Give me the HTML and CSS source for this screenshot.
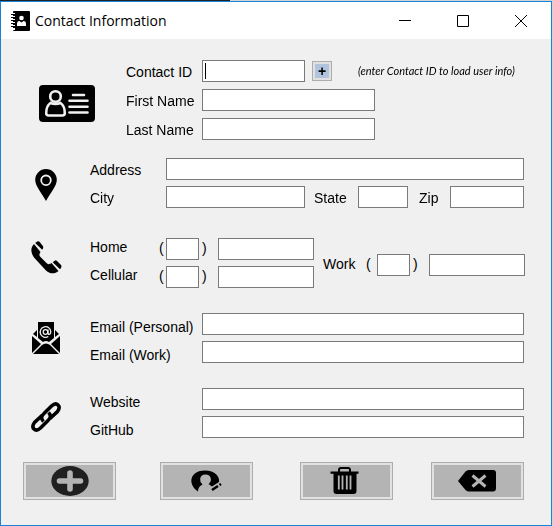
FILE: index.html
```html
<!DOCTYPE html>
<html lang="en">
<head>
<meta charset="utf-8">
<title>Contact Information</title>
<link rel="stylesheet" href="styles.css">
</head>
<body>
<main class="window">
  <header class="titlebar">
    <svg class="app-icon" viewBox="0 0 19 20" aria-hidden="true">
      <rect x="2" y="0" width="17" height="20" rx="1"/>
      <path d="M0 3h4M0 6h4M0 9h4M0 12h4M0 15h4M0 18h4" stroke="#fff" stroke-width="2"/>
      <path d="M0 3.500h4M0 6.500h4M0 9.500h4M0 12.500h4M0 15.500h4" stroke="#000" stroke-width="1"/>
      <circle cx="10.500" cy="7" r="2.300" fill="#fff"/>
      <path d="M6 15v-2q0-3 2.500-3l2 1.500 2-1.500q2.500 0 2.500 3v2z" fill="#fff"/>
    </svg>
    <h1 class="title">Contact Information</h1>
    <div class="window-controls">
      <button type="button" class="window-button" aria-label="Minimize"><svg class="window-glyph" viewBox="0 0 12 12"><path d="M0 5.500h12"/></svg></button>
      <button type="button" class="window-button" aria-label="Maximize"><svg class="window-glyph" viewBox="0 0 12 12"><path d="M.5.5h11v11H.5z"/></svg></button>
      <button type="button" class="window-button" aria-label="Close"><svg class="window-glyph" viewBox="0 0 12 12"><path d="M0 0l12 12M12 0L0 12"/></svg></button>
    </div>
  </header>

  <form class="form">
    <section class="section section-name">
      <svg class="icon icon-card" viewBox="0 0 56 37" aria-hidden="true">
        <rect width="56" height="37" rx="4"/>
        <g fill="none" stroke="#f0f0f0" stroke-width="2.600" stroke-linecap="round">
          <circle cx="16.500" cy="11.500" r="5.300"/>
          <path d="M11.500 18q-4.300 3-4.300 10 0 2.500 2.500 2.500h13.600q2.500 0 2.500-2.500 0-7-4.300-10-5 2-10 0z"/>
          <path d="M34 10h11M30.500 15.800h18M30.500 21.800h18M30.500 27.500h18"/>
        </g>
      </svg>
      <div class="fields">
        <div class="row">
          <label class="label" for="contact-id">Contact ID</label>
          <input class="box box-id" id="contact-id" type="text" autofocus>
          <button type="button" class="load" aria-label="Load contact">+</button>
          <span class="hint">(enter Contact ID to load user info)</span>
        </div>
        <div class="row">
          <label class="label" for="first-name">First Name</label>
          <input class="box box-name" id="first-name" type="text">
        </div>
        <div class="row">
          <label class="label" for="last-name">Last Name</label>
          <input class="box box-name" id="last-name" type="text">
        </div>
      </div>
    </section>

    <section class="section section-address">
      <svg class="icon icon-pin" viewBox="0 0 22 32" aria-hidden="true">
        <path d="M11 0a10.800 10.800 0 0 1 10.800 10.800C21.800 17 16 23 11 32 6 23 .2 17 .2 10.800A10.800 10.800 0 0 1 11 0z"/>
        <circle cx="11" cy="11.300" r="4.800" fill="none" stroke="#f0f0f0" stroke-width="1.800"/>
      </svg>
      <div class="fields">
        <div class="row">
          <label class="label" for="address">Address</label>
          <input class="box box-wide" id="address" type="text">
        </div>
        <div class="row">
          <label class="label" for="city">City</label>
          <input class="box box-wide" id="city" type="text">
          <label class="label-state" for="state">State</label>
          <input class="box box-state" id="state" type="text">
          <label class="label-zip" for="zip">Zip</label>
          <input class="box box-zip" id="zip" type="text">
        </div>
      </div>
    </section>

    <section class="section section-phone">
      <svg class="icon icon-phone" viewBox="0 0 31 33" aria-hidden="true">
        <path d="M3 3C-1 7 0 12 3 16.500L14.500 29c4 4 9 4.500 13 1L20.500 22c-2 1.500-3 1.500-4.500.5L9.500 16c-1.500-1.500-1.500-3 0-5z"/>
        <path d="M4.200 2l2-1.500q1.200-.8 2.300.3l3.500 4.500q.8 1.200-.8 3.500zM21.700 21.200l2-1.500q1.200-.8 2.300.2l4 4q1.300 1.500-1 4.300z"/>
      </svg>
      <div class="fields">
        <div class="row">
          <label class="label" for="home">Home</label>
          <span class="paren">(</span><input class="box box-area" type="text" aria-label="Home area code"><span class="paren paren-close">)</span>
          <input class="box box-phone" id="home" type="text">
        </div>
        <div class="row">
          <label class="label" for="cell">Cellular</label>
          <span class="paren">(</span><input class="box box-area" type="text" aria-label="Cellular area code"><span class="paren paren-close">)</span>
          <input class="box box-phone" id="cell" type="text">
        </div>
      </div>
      <div class="row work">
        <label class="label-work" for="work">Work</label>
        <span class="paren paren-work">(</span><input class="box box-area" type="text" aria-label="Work area code"><span class="paren paren-close">)</span>
        <input class="box box-phone" id="work" type="text">
      </div>
    </section>

    <section class="section section-email">
      <svg class="icon icon-mail" viewBox="0 0 28 32" aria-hidden="true">
        <path d="M6 0h16v16l-5 4q-3-2-6 0l-5-4zM0 14l9 8-9 9zM28 14v17l-9-9zM1 32l9-9q4-3 8 0l9 9zM1 12l4-4v7zM27 12l-4-4v7z"/>
        <g fill="none" stroke="#f0f0f0" stroke-width="1.300">
          <circle cx="13.500" cy="10" r="2.300"/>
          <path d="M16 7.500v3.300q0 1.700 1.400 1.500 1.400-.4 1.400-2.500a5.300 5.300 0 1 0-2.500 4.700"/>
        </g>
      </svg>
      <div class="fields">
        <div class="row">
          <label class="label" for="email-personal">Email (Personal)</label>
          <input class="box box-wide" id="email-personal" type="email">
        </div>
        <div class="row">
          <label class="label" for="email-work">Email (Work)</label>
          <input class="box box-wide" id="email-work" type="email">
        </div>
      </div>
    </section>

    <section class="section section-web">
      <svg class="icon icon-link" viewBox="0 0 30 30" aria-hidden="true">
        <g fill="none" stroke="#000" stroke-width="3.600">
          <path d="M12.500 19.500q-4-4 .5-8l7.500-7.500q4-3.500 6.500-1t-.5 6.500l-7.500 7"/>
          <path d="M17.500 10.500q4 4-.5 8L9.500 26q-4 3.500-6.500 1t.5-6.500l7.500-7"/>
        </g>
      </svg>
      <div class="fields">
        <div class="row">
          <label class="label" for="website">Website</label>
          <input class="box box-wide" id="website" type="text">
        </div>
        <div class="row">
          <label class="label" for="github">GitHub</label>
          <input class="box box-wide" id="github" type="text">
        </div>
      </div>
    </section>

    <div class="actions">
      <button type="button" class="action" aria-label="Add contact">
        <svg class="action-icon" viewBox="0 0 40 32"><ellipse cx="20" cy="16" rx="18.700" ry="15" fill="#202020"/><path d="M20 8v16M9.500 16h21" stroke="#b4b4b4" stroke-width="5.600" stroke-linecap="round"/></svg>
      </button>
      <button type="button" class="action" aria-label="Edit contact">
        <svg class="action-icon" viewBox="0 0 40 32"><path d="M9 26.500C-2 19 1 5.500 16 5.500c10 0 15 6 14 11.500l-7 4.500-3.500-2.500q3-2.500 2.300-5.500-.8-4-5.300-4t-5.300 4q-.7 3 2.300 6-4.500 2-4.500 7z" transform="translate(2)"/><path d="M25 25l6-4M32.500 20l1.500-1" stroke="#000" stroke-width="2.500"/></svg>
      </button>
      <button type="button" class="action" aria-label="Delete contact">
        <svg class="action-icon" viewBox="0 0 40 32"><path d="M4.500 6.500h28v2.200h-2V26q0 3-3 3h-17q-3 0-3-3V8.700h-3z"/><path d="M13 7V5q0-2 2-2h7q2 0 2 2v2" fill="none" stroke="#000" stroke-width="2"/><path d="M12.800 10.500v14M16.500 10.500v14M20.800 10.500v14M24.500 10.500v14" stroke="#b4b4b4" stroke-width="1.800"/></svg>
      </button>
      <button type="button" class="action" aria-label="Clear form">
        <svg class="action-icon" viewBox="0 0 40 32"><path d="M0 16L7.500 6.500Q9 5 11 5h24q3 0 3 3v15q0 3.500-3 3.500H11q-2 0-3.500-1.500z"/><path d="M14.500 10.500l13 11M27.500 10.500l-13 11" stroke="#b4b4b4" stroke-width="3"/></svg>
      </button>
    </div>
  </form>
</main>
</body>
</html>
```
FILE: styles.css
```css
* { box-sizing: border-box; }

body {
  margin: 0;
  padding: 1px 1px 0 0;
  min-height: 100vh;
  display: flex;
  background: linear-gradient(90deg, #222 230px, #d4d4d4 230px);
  font-family: "Liberation Sans", Arial, sans-serif;
  font-size: 14px;
  color: #000;
}

.window {
  flex: 1;
  min-width: 0;
  display: flex;
  flex-direction: column;
  border: 1px solid #1883d7;
  background: #f0f0f0;
}

.titlebar {
  display: flex;
  align-items: center;
  height: 37px;
  padding: 0 1px 0 10px;
  background: #fff;
}
.app-icon { width: 19px; height: 20px; }
.title {
  flex: 1;
  margin: 0 0 0 5px;
  font: 400 14px/20px "Open Sans", "Segoe UI", sans-serif;
}
.window-controls { display: flex; }
.window-button {
  width: 58px;
  height: 37px;
  padding: 0;
  border: 0;
  background: none;
}
.window-glyph {
  display: block;
  width: 12px;
  height: 12px;
  margin: 0 auto;
  fill: none;
  stroke: #000;
}

.form {
  flex: 1;
  padding: 21px 27px 0 22px;
}

.section { display: flex; }
.fields {
  flex: 1;
  min-width: 0;
  display: flex;
  flex-direction: column;
  gap: 6px;
}
.row {
  display: flex;
  align-items: center;
}
.label {
  flex: none;
  line-height: 16px;
}
.icon { flex: none; }

.box {
  height: 22px;
  min-width: 0;
  padding: 0 2px;
  border: 1px solid #7a7a7a;
  border-radius: 0;
  background: #fff;
  font: inherit;
  outline: none;
}
.box-wide { flex: 1; width: 100%; }
.box-id { width: 103px; }
.box-id:focus {
  background: linear-gradient(#000, #000) 2px 2px / 1px 16px no-repeat #fff;
  caret-color: transparent;
}
.box-name { width: 173px; }
.box-state { width: 50px; }
.box-zip { width: 74px; }
.box-area { width: 33px; }
.box-phone { width: 96px; }

.section-name .fields { gap: 7px; }
.section-name .label { width: 76px; padding-top: 2px; }
.icon-card { width: 56px; height: 37px; margin: 25px 31px 0 16px; }
.load {
  width: 20px;
  height: 20px;
  margin-left: 7px;
  padding: 0;
  border: 1px solid #adadad;
  background: #b0c4de;
  box-shadow: inset 0 0 0 2px #e1e1e1;
  font: bold 14px/16px "Liberation Sans", Arial, sans-serif;
  color: #000;
}
.hint {
  margin-left: 26px;
  font: italic 11px/14px Lato, sans-serif;
  white-space: nowrap;
}

.section-address { margin-top: 18px; }
.section-address .label { width: 76px; padding-top: 2px; }
.icon-pin { width: 22px; height: 32px; margin: 11px 33px 0 12px; }
.label-state { width: 53px; padding: 2px 0 0 9px; }
.label-zip { width: 42px; padding: 2px 0 0 11px; }

.section-phone { margin-top: 30px; }
.section-phone .fields { flex: none; }
.section-phone .label { width: 69px; padding-bottom: 4px; }
.icon-phone { width: 31px; height: 33px; margin: 3px 28px 0 8px; }
.paren { width: 7px; padding-bottom: 2px; }
.paren-close { width: 19px; padding-left: 3px; }
.paren-work { width: 11px; }
.work { margin: 0 -1px 0 auto; padding-top: 4px; }
.label-work { width: 43px; padding-bottom: 2px; }

.section-email { margin-top: 25px; }
.section-email .label { width: 112px; padding-top: 6px; }
.icon-mail { width: 28px; height: 32px; margin: 9px 30px 0 9px; }

.section-web { margin-top: 25px; }
.section-web .label { width: 112px; padding-top: 6px; }
.icon-link { width: 30px; height: 30px; margin: 14px 29px 0 8px; }

.actions {
  display: grid;
  grid-template-columns: 137fr 139fr 131fr 93px;
  margin-top: 24px;
}
.action {
  width: 93px;
  height: 38px;
  padding: 0;
  border: 1px solid #adadad;
  background: #b4b4b4;
  box-shadow: inset 0 0 0 2px #e1e1e1;
}
.action-icon {
  display: block;
  width: 40px;
  height: 32px;
  margin: 0 auto;
}
```
